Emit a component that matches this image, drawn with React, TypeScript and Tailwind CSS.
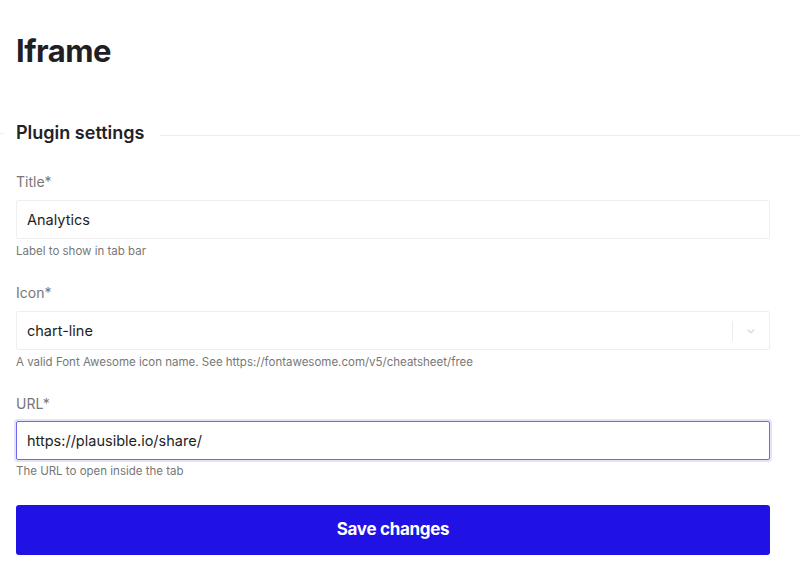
import React from "react";

export default function App() {
  return (
    <div className="w-[800px] h-[581px] bg-white overflow-hidden font-['Inter',sans-serif] text-[#1f1f1f]">
      <div className="px-4 pt-[33px]">
        <h1 className="text-[31px] leading-[36px] font-bold tracking-[-0.5px] text-[#202024]">Iframe</h1>
      </div>
      <div className="flex items-center mt-[53px] h-[22px]">
        <div className="w-[4px] h-px bg-[#ececec]" />
        <div className="pl-3 pr-4 text-[18px] font-semibold text-[#222226] leading-[22px]">Plugin settings</div>
        <div className="flex-1 h-px bg-[#ececec] mt-[4px]" />
      </div>
      <div className="px-4 pr-[30px] mt-[29px]">
        <label className="block text-[14px] leading-[18px] text-[#777]">Title*</label>
        <div className="mt-[9px] h-[39px] border border-[#efefef] rounded-[2px] flex items-center px-[10px] text-[14.5px] text-[#1e1e1e]">
          Analytics
        </div>
        <div className="mt-[5px] text-[11.5px] leading-[14px] text-[#777]">Label to show in tab bar</div>

        <label className="block mt-[26px] text-[14px] leading-[18px] text-[#777]">Icon*</label>
        <div className="mt-[9px] h-[39px] border border-[#efefef] rounded-[2px] flex items-center pl-[10px] text-[14.5px] text-[#1e1e1e]">
          <span className="flex-1">chart-line</span>
          <div className="w-px h-[20px] bg-[#ececec]" />
          <div className="w-[36px] flex items-center justify-center">
            <svg width="12" height="12" viewBox="0 0 20 20" fill="#d9d9d9">
              <path d="M4.516 7.548c0.436-0.446 1.043-0.481 1.576 0l3.908 3.747 3.908-3.747c0.533-0.481 1.141-0.446 1.574 0 0.436 0.445 0.408 1.197 0 1.615-0.406 0.418-4.695 4.502-4.695 4.502-0.217 0.223-0.502 0.335-0.787 0.335s-0.57-0.112-0.789-0.335c0 0-4.287-4.084-4.695-4.502s-0.436-1.170 0-1.615z" />
            </svg>
          </div>
        </div>
        <div className="mt-[5px] text-[11.5px] leading-[14px] text-[#777]">A valid Font Awesome icon name. See https://fontawesome.com/v5/cheatsheet/free</div>

        <label className="block mt-[26px] text-[14px] leading-[18px] text-[#777]">URL*</label>
        <div className="mt-[8px] h-[39px] border border-[#6f68ef] rounded-[2px] flex items-center px-[10px] text-[14.5px] text-[#1e1e1e] ring-2 ring-[#e4e2fc]">
          https://plausible.io/share/
        </div>
        <div className="mt-[4px] text-[11.5px] leading-[14px] text-[#777]">The URL to open inside the tab</div>

        <button className="mt-[27px] w-full h-[50px] rounded-[3px] bg-[#2011e5] text-white text-[17px] font-bold tracking-[-0.3px]">
          Save changes
        </button>
      </div>
    </div>
  );
}
